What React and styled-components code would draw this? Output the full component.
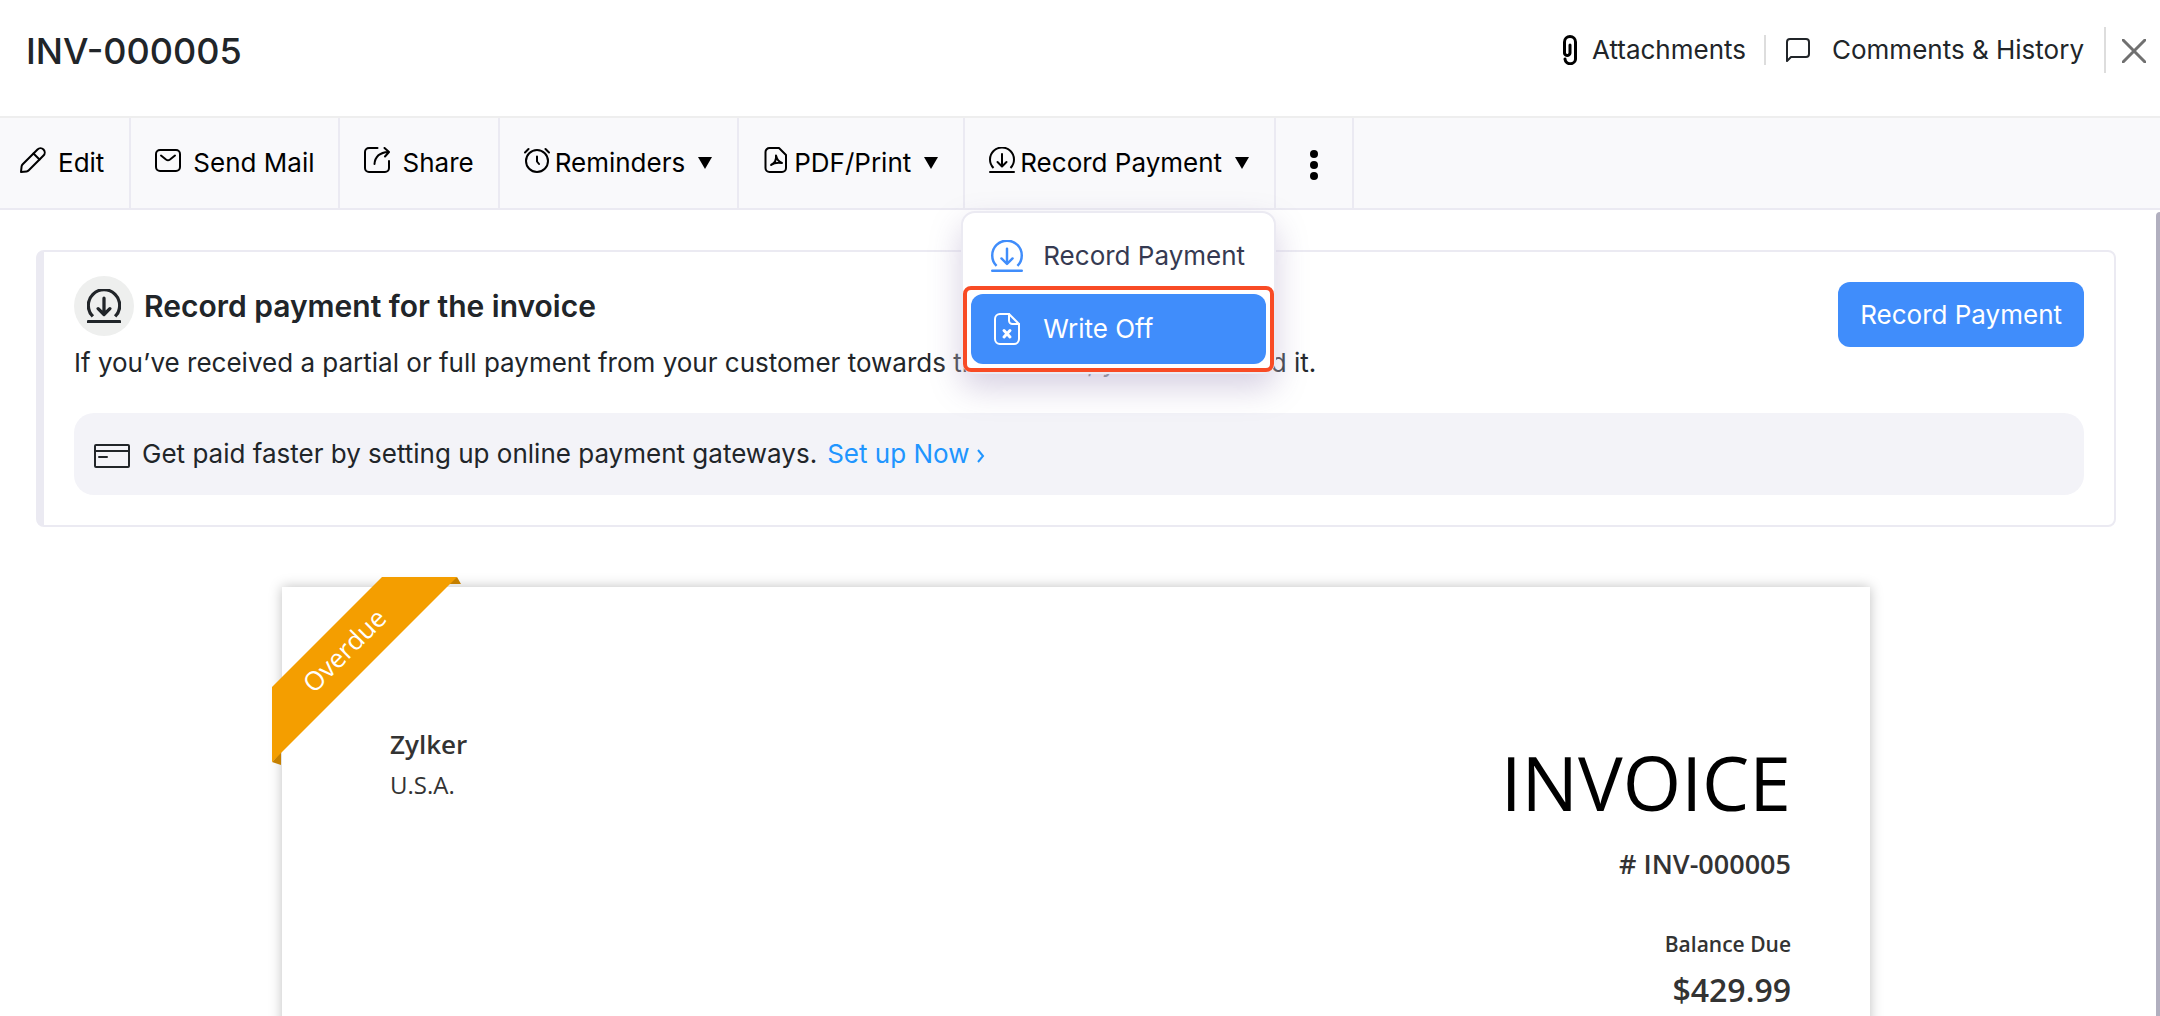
import React from "react"
import styled, {createGlobalStyle, css} from "styled-components"

const blue = "#408dfb";
const ink = "#212529";
const line = "#ebeaf2";
const ui = `Inter, "Liberation Sans", sans-serif`;
const paperFont = `"Open Sans", "Noto Sans", sans-serif`;

const GlobalStyle = createGlobalStyle`
  * {
    box-sizing: border-box;
  }
  html, body, #root {
    height: 100%;
  }
  body {
    margin: 0;
    overflow: hidden;
    background-color: white;
    color: ${ink};
    font-family: ${ui};
    font-size: 26px;
    line-height: 40px;
  }
  button {
    font: inherit;
    color: inherit;
    border: none;
    background: none;
    padding: 0;
    cursor: pointer;
  }
  h1, h2, p {
    margin: 0;
  }
  svg {
    display: block;
    flex: none;
  }
`;

const Page = styled.div`
  height: 100%;
  display: flex;
  flex-direction: column;
`;

const Header = styled.header`
  flex: none;
  height: 118px;
  padding: 0 14px 14px 26px;
  display: flex;
  align-items: center;
  justify-content: space-between;
  border-bottom: 2px solid #eeeeee;
`;

const Title = styled.h1`
  font-size: 36px;
  font-weight: 500;
`;

const HeaderActions = styled.div`
  display: flex;
  align-items: center;
  padding-bottom: 2px;
`;

const HeaderButton = styled.button`
  display: flex;
  align-items: center;
  gap: ${({$gap}) => $gap}px;
`;

const CloseButton = styled(HeaderButton)`
  padding-top: 2px;
  color: #707070;
`;

const Divider = styled.span`
  width: 2px;
  height: ${({$tall}) => $tall ? 46 : 30}px;
  margin: 0 ${({$tall}) => $tall ? 16 : 20}px 0 ${({$tall}) => $tall ? 20 : 18}px;
  background-color: #dddddd;
`;

const Toolbar = styled.nav`
  flex: none;
  height: 92px;
  display: flex;
  position: relative;
  z-index: 2;
  background-color: #f9f9fb;
  border-bottom: 2px solid ${line};
`;

const ToolSlot = styled.div`
  position: relative;
  display: flex;
  border-right: 2px solid ${line};
`;

const ToolButton = styled.button`
  display: flex;
  align-items: center;
  gap: ${({$menu}) => $menu ? 5 : 12}px;
  padding: 0 ${({$menu}) => $menu ? 25 : 24}px 0 24px;
  color: black;
  ${({$first}) => $first && css`padding: 0 25px 0 20px;`}
  ${({$icon}) => $icon && css`padding: 4px 33px 0;`}

  > svg:first-child {
    margin-bottom: ${({$icon}) => $icon ? 0 : 6}px;
  }
`;

const Caret = styled.span`
  margin-left: 8px;
  border: 7px solid transparent;
  border-top: 12px solid black;
  border-bottom: none;
`;

const Menu = styled.div`
  position: absolute;
  top: 93px;
  left: -4px;
  right: -2px;
  display: flex;
  flex-direction: column;
  gap: 3px;
  padding: 8px;
  background-color: white;
  border: 2px solid ${line};
  border-radius: 14px;
  box-shadow: 0 14px 32px rgba(208, 201, 222, 0.85);
`;

const MenuItem = styled.button`
  position: relative;
  height: 70px;
  padding: 0 20px;
  display: flex;
  align-items: center;
  gap: 20px;
  border-radius: 12px;
  color: ${({$active}) => $active ? "white" : "#363a52"};
  background-color: ${({$active}) => $active ? blue : "white"};
  white-space: nowrap;

  > svg {
    color: ${({$active}) => $active ? "white" : blue};
  }
`;

const Highlight = styled.span`
  position: absolute;
  inset: -8px;
  border: 4px solid #f84b25;
  border-radius: 8px;
`;

const Body = styled.div`
  flex: 1;
  min-height: 0;
  display: flex;
`;

const Content = styled.main`
  flex: 1;
  min-width: 0;
  overflow: hidden;
  padding: 40px 36px 0;
`;

const Scrollbar = styled.div`
  width: 8px;
  padding: 2px 0 0 4px;
`;

const Thumb = styled.div`
  height: 100%;
  background-color: #b1afbf;
  border-radius: 4px 0 0 0;
`;

const Panel = styled.section`
  padding: 24px 30px 30px;
  border: 2px solid ${line};
  border-left-width: 8px;
  border-radius: 8px;
`;

const PanelTop = styled.div`
  display: flex;
  justify-content: space-between;
  align-items: flex-start;
`;

const PanelHeading = styled.div`
  display: flex;
  align-items: center;
  gap: 10px;
`;

const PanelTitle = styled.h2`
  font-size: 30px;
  font-weight: 600;
`;

const Circle = styled.span`
  width: 60px;
  height: 60px;
  display: flex;
  align-items: center;
  justify-content: center;
  border-radius: 50%;
  background-color: #eeefee;
`;

const PanelText = styled.p`
  padding-top: 7px;
  white-space: nowrap;
`;

const PrimaryButton = styled.button`
  height: 65px;
  margin-top: 6px;
  padding: 0 22px;
  border-radius: 12px;
  color: white;
  background-color: ${blue};
`;

const Gateway = styled.div`
  height: 82px;
  margin-top: 30px;
  padding: 0 20px;
  display: flex;
  align-items: center;
  border-radius: 20px;
  background-color: #f3f3f8;

  > svg {
    margin-top: 4px;
  }
`;

const GatewayText = styled.p`
  padding-left: 12px;
`;

const SetupLink = styled.a`
  display: flex;
  align-items: center;
  gap: 8px;
  padding-left: 10px;
  color: #2095ff;
  text-decoration: none;

  > svg {
    margin-top: 4px;
  }
`;

const Paper = styled.article`
  position: relative;
  max-width: 1588px;
  min-height: 1200px;
  margin: 60px auto 0;
  padding: 136px 79px 0 108px;
  display: flex;
  justify-content: space-between;
  align-items: flex-start;
  background-color: white;
  box-shadow: 0 0 12px rgba(0, 0, 0, 0.25);
  color: #333333;
  font-family: ${paperFont};
`;

const Ribbon = styled.div`
  position: absolute;
  top: -10px;
  left: -10px;
  width: 190px;
  height: 190px;
`;

const RibbonLabel = styled.span`
  position: absolute;
  top: 73px;
  left: 72px;
  transform: translate(-50%, -50%) rotate(-45deg);
  color: white;
  font-size: 26px;
`;

const Company = styled.div`
  font-size: 24px;
`;

const CompanyName = styled.p`
  font-size: 26px;
  font-weight: 600;
  line-height: 42px;
`;

const Summary = styled.div`
  padding-top: 8px;
  text-align: right;
  font-weight: 600;
`;

const InvoiceTitle = styled.h2`
  color: black;
  font-size: 75px;
  font-weight: 400;
  line-height: 102px;
`;

const InvoiceNumber = styled.p`
  padding-top: 11px;
  font-size: 27px;
`;

const BalanceLabel = styled.p`
  padding-top: 40px;
  font-size: 21px;
`;

const BalanceAmount = styled.p`
  padding-top: 6px;
  font-size: 32px;
`;

function Icon({size = 26, box = 26, width = 2, children}) {
    return(
        <svg width={size} height={size} viewBox={`0 0 ${box} ${box}`} fill="none" stroke="currentColor"
            strokeWidth={width} strokeLinecap="round" strokeLinejoin="round" aria-hidden="true">
            {children}
        </svg>);
}

function EditIcon() {
    return(
        <Icon>
            <path d="M1 25l.6-5.6c.1-.9.5-1.6 1.1-2.2L17.500 2.500a4.300 4.300 0 0 1 6 0 4.300 4.300 0 0 1 0 6L8.800 23.300c-.6.6-1.300 1-2.200 1.100z"/>
            <path d="M13.500 6.500l6 6"/>
        </Icon>);
}

function MailIcon() {
    return(
        <Icon>
            <rect x="1" y="3" width="24" height="21" rx="4"/>
            <path d="M6 8.500l5 4a3.500 3.500 0 0 0 4 0l5-4"/>
        </Icon>);
}

function ShareIcon() {
    return(
        <Icon>
            <path d="M13.500 1H5a4 4 0 0 0-4 4v16a4 4 0 0 0 4 4h16a4 4 0 0 0 4-4v-7"/>
            <path d="M10.500 17c.5-7 5-11.500 14-12M20.500 1l4.500 4-4 4.500"/>
        </Icon>);
}

function ClockIcon() {
    return(
        <Icon>
            <circle cx="13" cy="14" r="11"/>
            <path d="M13 9.500v5l2 2.500M1 5.500L4.500 2M21.500 2L25 5.500"/>
        </Icon>);
}

function PdfIcon() {
    return(
        <Icon>
            <path d="M6.500 1H16l7 7v13a4 4 0 0 1-4 4H6.500a4 4 0 0 1-4-4V5a4 4 0 0 1 4-4z"/>
            <path d="M8 18c4-2 5.500-5.500 5-9.500 1 4 3 6.500 6 7.500-4-.8-8-.2-11 2z"/>
        </Icon>);
}

function PaymentIcon({size, width}) {
    return(
        <Icon size={size} width={width}>
            <path d="M4.500 21A12 12 0 1 1 21.500 21" strokeLinecap="butt"/>
            <path d="M13 7v12M8.500 15l4.500 4.500 4.500-4.500M1 25h24"/>
        </Icon>);
}

function WriteOffIcon() {
    return(
        <Icon size={32} box={32}>
            <path d="M18 1H9a5 5 0 0 0-5 5v20a5 5 0 0 0 5 5h14a5 5 0 0 0 5-5V11z"/>
            <path d="M18 1v6.500a3.500 3.500 0 0 0 3.500 3.500H28"/>
            <path d="M13 17.500l6 6.500M19 17.500L13 24" strokeWidth="3"/>
        </Icon>);
}

function MoreIcon() {
    return(
        <svg width="10" height="30" viewBox="0 0 10 30" aria-hidden="true">
            <circle cx="5" cy="4" r="4"/>
            <circle cx="5" cy="15" r="4"/>
            <circle cx="5" cy="26" r="4"/>
        </svg>);
}

function ClipIcon() {
    return(
        <svg width="14" height="30" viewBox="0 0 14 30" fill="none" stroke="black" strokeWidth="3"
            strokeLinecap="round" aria-hidden="true">
            <path d="M7 10v8a2.500 2.500 0 0 1-5.500-.5V7a5 5 0 0 1 11 0v16a5 5 0 0 1-10.500 1"/>
        </svg>);
}

function CommentIcon() {
    return(
        <Icon size={24} box={24}>
            <path d="M1 23V4a3 3 0 0 1 3-3h16a3 3 0 0 1 3 3v12a3 3 0 0 1-3 3H5z"/>
        </Icon>);
}

function CloseIcon() {
    return(
        <Icon size={24} box={24} width={3}>
            <path d="M1 1l22 22M23 1L1 23"/>
        </Icon>);
}

function CardIcon() {
    return(
        <svg width="36" height="26" viewBox="0 0 36 26" fill="none" stroke="currentColor" strokeWidth="2"
            strokeLinecap="round" aria-hidden="true">
            <rect x="1" y="2" width="34" height="22" rx="1"/>
            <path d="M1 8h34M5 14h8"/>
        </svg>);
}

function OverdueRibbon() {
    return(
        <Ribbon>
            <svg width="190" height="190" viewBox="0 0 190 190" aria-hidden="true">
                <path d="M185 0l4 7h-16zM0 185l9 3v-13z" fill="#c47f00"/>
                <path d="M110 0h75L0 185v-75z" fill="#f49e00"/>
            </svg>
            <RibbonLabel>Overdue</RibbonLabel>
        </Ribbon>);
}

const tools = [
    {label: "Edit", Glyph: EditIcon, first: true},
    {label: "Send Mail", Glyph: MailIcon},
    {label: "Share", Glyph: ShareIcon},
    {label: "Reminders", Glyph: ClockIcon, menu: true},
    {label: "PDF/Print", Glyph: PdfIcon, menu: true},
];

function Tool({label, Glyph, first, menu, children}) {
    return(
        <ToolSlot>
            <ToolButton type="button" $first={first} $menu={menu}>
                <Glyph/>
                {label}
                {menu && <Caret/>}
            </ToolButton>
            {children}
        </ToolSlot>);
}

export default function App() {
    return(
        <>
        <GlobalStyle/>
        <Page>
            <Header>
                <Title>INV-000005</Title>
                <HeaderActions>
                    <HeaderButton type="button" $gap={15}><ClipIcon/>Attachments</HeaderButton>
                    <Divider/>
                    <HeaderButton type="button" $gap={22}><CommentIcon/>Comments &amp; History</HeaderButton>
                    <Divider $tall/>
                    <CloseButton type="button" aria-label="Close"><CloseIcon/></CloseButton>
                </HeaderActions>
            </Header>
            <Toolbar>
                {tools.map(tool => <Tool key={tool.label} {...tool}/>)}
                <Tool label="Record Payment" Glyph={PaymentIcon} menu>
                    <Menu>
                        <MenuItem type="button"><PaymentIcon size={32}/>Record Payment</MenuItem>
                        <MenuItem type="button" $active><WriteOffIcon/>Write Off<Highlight/></MenuItem>
                    </Menu>
                </Tool>
                <ToolSlot>
                    <ToolButton type="button" $icon aria-label="More"><MoreIcon/></ToolButton>
                </ToolSlot>
            </Toolbar>
            <Body>
                <Content>
                    <Panel>
                        <PanelTop>
                            <div>
                                <PanelHeading>
                                    <Circle><PaymentIcon size={34} width={2.5}/></Circle>
                                    <PanelTitle>Record payment for the invoice</PanelTitle>
                                </PanelHeading>
                                <PanelText>If you’ve received a partial or full payment from your customer towards the invoice, you can record it.</PanelText>
                            </div>
                            <PrimaryButton type="button">Record Payment</PrimaryButton>
                        </PanelTop>
                        <Gateway>
                            <CardIcon/>
                            <GatewayText>Get paid faster by setting up online payment gateways.</GatewayText>
                            <SetupLink href="#setup">
                                Set up Now
                                <svg width="8" height="14" viewBox="0 0 8 14" fill="none" stroke="currentColor" strokeWidth="2" aria-hidden="true">
                                    <path d="M1 1l5 6-5 6"/>
                                </svg>
                            </SetupLink>
                        </Gateway>
                    </Panel>
                    <Paper>
                        <OverdueRibbon/>
                        <Company>
                            <CompanyName>Zylker</CompanyName>
                            <p>U.S.A.</p>
                        </Company>
                        <Summary>
                            <InvoiceTitle>INVOICE</InvoiceTitle>
                            <InvoiceNumber># INV-000005</InvoiceNumber>
                            <BalanceLabel>Balance Due</BalanceLabel>
                            <BalanceAmount>$429.99</BalanceAmount>
                        </Summary>
                    </Paper>
                </Content>
                <Scrollbar><Thumb/></Scrollbar>
            </Body>
        </Page>
        </>);
}
